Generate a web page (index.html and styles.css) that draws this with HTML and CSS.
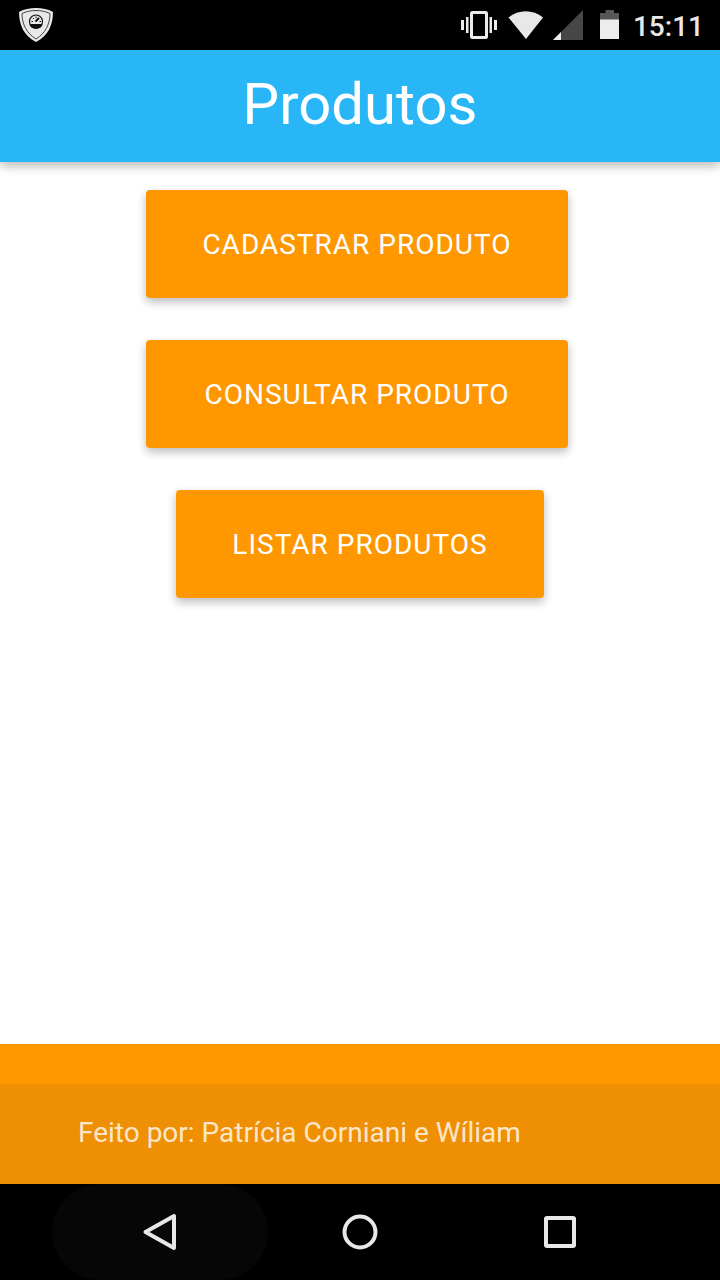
FILE: index.html
```html
<!DOCTYPE html>
<html lang="pt-BR">
<head>
    <meta charset="utf-8">
    <meta name="viewport" content="width=device-width, initial-scale=1">
    <title>Produtos</title>
    <link rel="stylesheet" href="styles.css">
</head>
<body>
    <div class="status-bar">
        <svg class="status-shield" width="36" height="36" viewBox="0 0 36 36" aria-hidden="true">
            <path d="M18 1C12 1 6 2 1 5c0 13 5 24 17 30C30 29 35 18 35 5 30 2 24 1 18 1z" fill="#e8e8e8"/>
            <path d="M18 3.500C13 3.500 8 4.500 4 6.500c0 11 5 20 14 25.500C27 26.500 32 17.500 32 6.500 28 4.500 23 3.500 18 3.500z" fill="none" stroke="#444" stroke-width="1"/>
            <circle cx="18" cy="14.500" r="6.500" fill="#e8e8e8" stroke="#111" stroke-width="1.200"/>
            <path d="M11.500 17h13a6.500 5 0 0 1-13 0z" fill="#111"/>
            <path d="M17.500 14.500l3.500-3.500" stroke="#111" stroke-width="2"/>
            <path d="M13.500 14.500h1.500M15 11l1 1M18 9.500v1.500M21.500 14.500h1.500" stroke="#111" stroke-width="1"/>
        </svg>
        <div class="status-icons">
            <svg width="36" height="30" viewBox="0 0 36 30" aria-hidden="true">
                <rect x="10.500" y="2.500" width="15" height="25" rx="1" fill="none" stroke="#ececec" stroke-width="3"/>
                <path d="M0 10h3v10H0zM33 10h3v10h-3zM5 7h2.500v16H5zM28.500 7H31v16h-2.500z" fill="#ececec"/>
            </svg>
            <svg width="36" height="30" viewBox="0 0 36 30" aria-hidden="true">
                <path d="M1.500 7.500C11.500-1 26-1 36 7.500L19 29z" fill="#e8e8e8"/>
            </svg>
            <svg width="30" height="30" viewBox="0 0 30 30" aria-hidden="true">
                <path d="M0 30L30 0v30z" fill="#474747"/>
                <path d="M0 30l8-8v8z" fill="#ececec"/>
            </svg>
            <svg width="20" height="30" viewBox="0 0 20 30" aria-hidden="true">
                <path d="M5.500 0h8.500v3H19v7H0V3h5.500z" fill="#575757"/>
                <path d="M0 9.500h19V29H0z" fill="#ececec"/>
            </svg>
        </div>
        <span class="status-time">15:11</span>
    </div>

    <header class="page-header">
        <h1 class="page-title">Produtos</h1>
    </header>

    <main class="menu">
        <div class="menu-row menu-row-wide">
            <button type="button" class="btn">Cadastrar Produto</button>
        </div>
        <div class="menu-row menu-row-wide">
            <button type="button" class="btn">Consultar Produto</button>
        </div>
        <div class="menu-row">
            <button type="button" class="btn">Listar Produtos</button>
        </div>
    </main>

    <footer class="page-footer">
        <div class="footer-copyright">Feito por: Patrícia Corniani e Wíliam</div>
    </footer>

    <nav class="nav-bar">
        <button type="button" class="nav-button nav-button-pressed" aria-label="Voltar">
            <svg width="40" height="40" viewBox="0 0 40 40">
                <path d="M34 4v32L5.500 20z" fill="none" stroke="#e8e8e8" stroke-width="4" stroke-linejoin="round"/>
            </svg>
        </button>
        <button type="button" class="nav-button" aria-label="Início">
            <svg width="40" height="40" viewBox="0 0 40 40">
                <circle cx="20" cy="20" r="15.500" fill="none" stroke="#e8e8e8" stroke-width="4"/>
            </svg>
        </button>
        <button type="button" class="nav-button" aria-label="Recentes">
            <svg width="40" height="40" viewBox="0 0 40 40">
                <rect x="6" y="6" width="28" height="28" rx="1" fill="none" stroke="#e8e8e8" stroke-width="4"/>
            </svg>
        </button>
    </nav>
</body>
</html>
```
FILE: styles.css
```css
:root {
    --orange: #ff9800;
    --blue: #29b6f6;
}

* {
    box-sizing: border-box;
}

body {
    margin: 0;
    min-height: 100vh;
    display: flex;
    flex-direction: column;
    background: #fff;
    font-family: Roboto, sans-serif;
    font-size: 28px;
}

svg {
    display: block;
}

.status-bar {
    display: flex;
    align-items: center;
    height: 50px;
    padding: 0 16px 0 18px;
    background: #000;
}

.status-icons {
    display: flex;
    gap: 10px;
    margin-left: auto;
}

.status-icons svg:last-child {
    margin-left: 7px;
}

.status-time {
    margin-left: 13px;
    padding-top: 4px;
    color: #e8e8e8;
    font-weight: 500;
    line-height: 32px;
}

.page-header {
    position: relative;
    padding-bottom: 4px;
    background: var(--blue);
    text-align: center;
    box-shadow: 0 4px 10px 0 rgba(0, 0, 0, 0.16), 0 4px 10px 0 rgba(0, 0, 0, 0.12);
}

.page-title {
    margin: 0;
    color: #fff;
    font-size: 58px;
    font-weight: 400;
    line-height: 108px;
}

.menu {
    flex: 1;
    display: flex;
    flex-direction: column;
    gap: 42px;
    padding: 28px 0;
}

.menu-row {
    display: flex;
    justify-content: center;
}

.menu-row-wide {
    padding-right: 6px;
}

.menu-row-wide .btn {
    min-width: 422px;
}

.btn {
    height: 108px;
    padding: 0 56px;
    border: none;
    border-radius: 4px;
    background: var(--orange);
    color: #fff;
    font-family: inherit;
    font-size: 28px;
    letter-spacing: 1px;
    text-transform: uppercase;
    box-shadow: 0 4px 10px 0 rgba(0, 0, 0, 0.16), 0 4px 10px 0 rgba(0, 0, 0, 0.12);
    cursor: pointer;
}

.page-footer {
    padding-top: 40px;
    background: var(--orange);
}

.footer-copyright {
    padding: 0 78px 2px;
    background: rgba(51, 51, 51, 0.08);
    color: rgba(255, 255, 255, 0.8);
    line-height: 98px;
}

.nav-bar {
    display: flex;
    justify-content: center;
    height: 96px;
    background: #000;
    overflow: hidden;
}

.nav-button {
    position: relative;
    display: flex;
    align-items: center;
    justify-content: center;
    width: 200px;
    padding: 0;
    border: none;
    background: none;
}

.nav-button svg {
    position: relative;
}

.nav-button-pressed::before {
    content: "";
    position: absolute;
    inset: 0 -8px;
    border-radius: 48px;
    background: #060606;
}
```
